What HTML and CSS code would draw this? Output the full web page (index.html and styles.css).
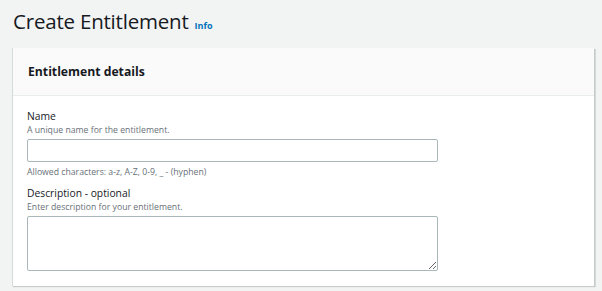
FILE: index.html
```html
<!DOCTYPE html>
<html lang="en">

<head>
    <meta charset="UTF-8">
    <meta name="viewport" content="width=device-width, initial-scale=1.0">
    <title>Create Entitlement</title>
    <link rel="stylesheet" href="styles.css">
</head>

<body>
    <div class="page">
        <div class="page__header">
            <h1 class="page__title">Create Entitlement</h1>
            <a class="page__info" href="#">Info</a>
        </div>

        <div class="panel">
            <div class="panel__header">
                <h2 class="panel__title">Entitlement details</h2>
            </div>
            <div class="panel__body">
                <div class="field">
                    <label class="field__label" for="name">Name</label>
                    <div class="field__desc">A unique name for the entitlement.</div>
                    <input class="field__input" id="name" type="text">
                    <div class="field__hint">Allowed characters: a-z, A-Z, 0-9, _ - (hyphen)</div>
                </div>
                <div class="field">
                    <label class="field__label" for="desc">Description - optional</label>
                    <div class="field__desc">Enter description for your entitlement.</div>
                    <textarea class="field__input field__textarea" id="desc"></textarea>
                </div>
            </div>
        </div>
    </div>
</body>

</html>
```

FILE: styles.css
```css
* {
    box-sizing: border-box;
}

html,
body {
    width: 100%;
    height: 100%;
}

body {
    margin: 0;
    padding: 0;
    overflow: hidden;
    font-family: 'Open Sans', 'Liberation Sans', sans-serif;
    background-color: #f2f3f3;
    color: #16191f;
}

.page {
    padding: 7px 7px 0 12px;
}

.page__header {
    display: flex;
    align-items: baseline;
    gap: 6px;
    padding-left: 1px;
    height: 41px;
}

.page__title {
    margin: 0;
    font-size: 20.5px;
    font-weight: 400;
    letter-spacing: -0.2px;
}

.page__info {
    font-size: 9px;
    font-weight: 700;
    color: #0073bb;
    text-decoration: none;
}

.panel {
    background-color: #fff;
    border-left: 1px solid #d5dbdb;
    box-shadow: 1px 1px 1px #c6cccc, 2px 1px 0 #d5dbdb;
    width: 582px;
}

.panel__header {
    background-color: #fafafa;
    border-bottom: 1px solid #eaeded;
    height: 48px;
    display: flex;
    align-items: center;
    padding: 0 15px;
}

.panel__title {
    margin: 0;
    font-size: 12.2px;
    font-weight: 700;
}

.panel__body {
    padding: 12px 15px 15px 14px;
    display: flex;
    flex-direction: column;
    gap: 7px;
}

.field {
    display: flex;
    flex-direction: column;
}

.field__label {
    font-size: 10.3px;
    line-height: 16px;
}

.field__desc,
.field__hint {
    font-size: 8.7px;
    line-height: 12px;
    color: #687078;
}

.field__desc {
    margin-bottom: 3px;
}

.field__hint {
    margin-top: 4px;
}

.field__input {
    width: 411px;
    height: 23px;
    border: 1px solid #aab7b8;
    border-radius: 2px;
    background-color: #fff;
    font-family: inherit;
}

.field__textarea {
    height: 55px;
    resize: vertical;
}
```
